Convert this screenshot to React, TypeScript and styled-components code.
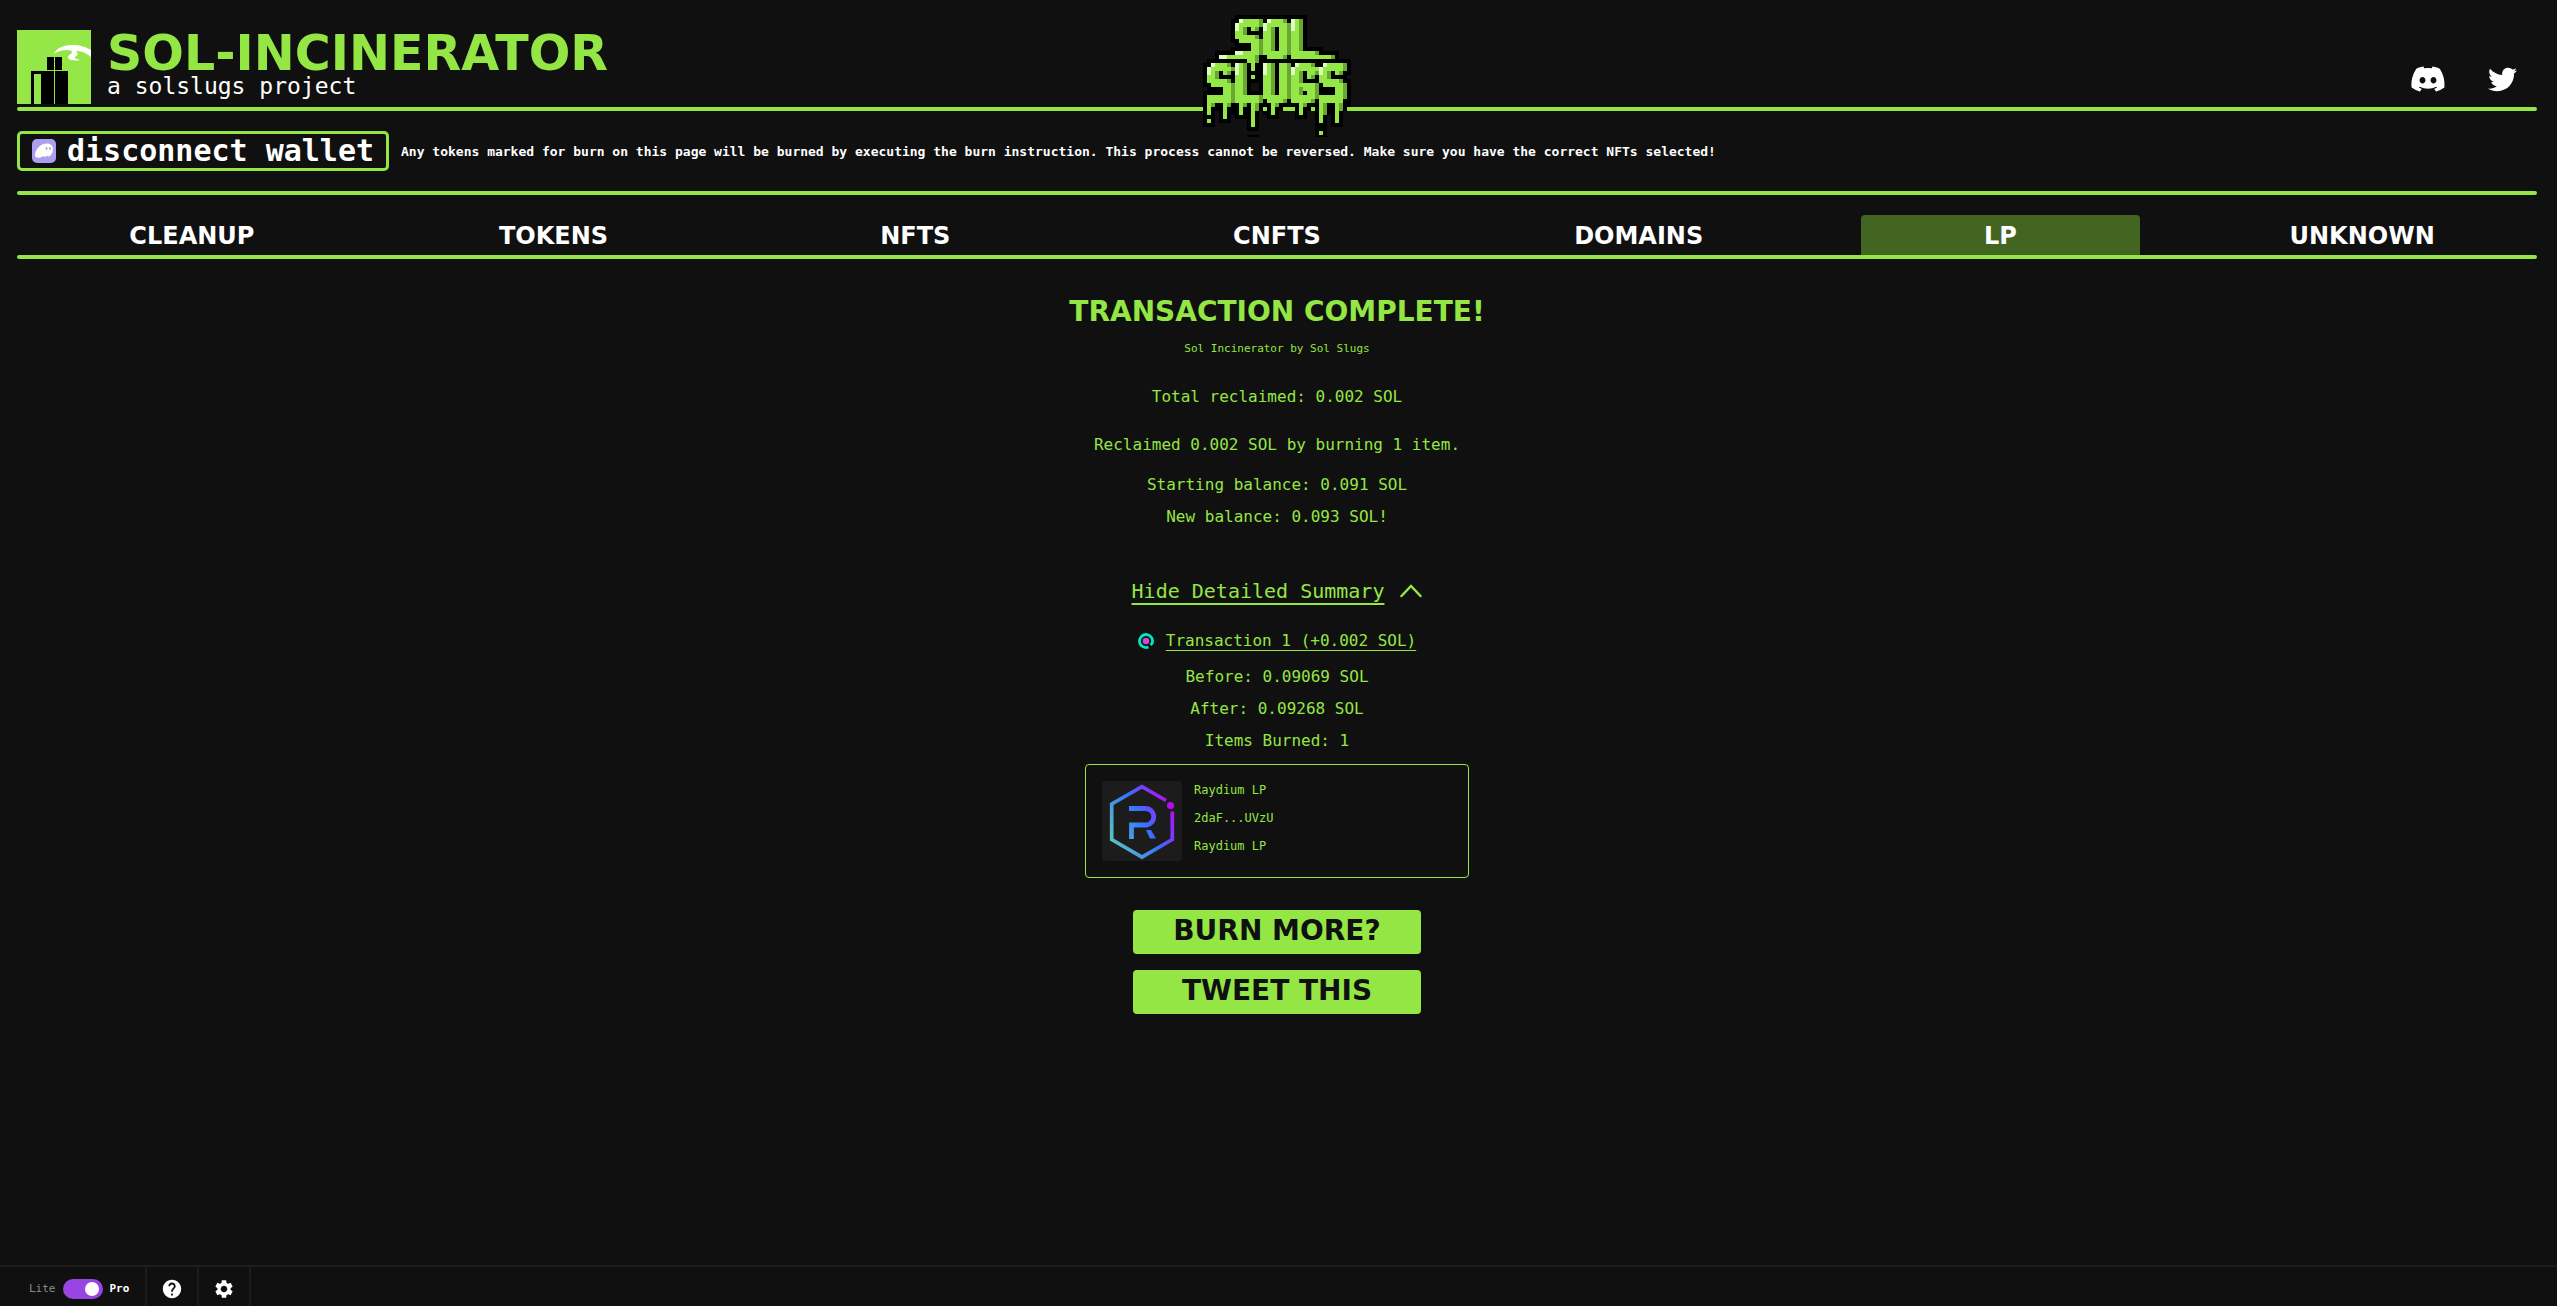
import React, { useState } from "react";
import styled, { createGlobalStyle, ThemeProvider } from "styled-components";
import { FaDiscord, FaTwitter } from "react-icons/fa";
import { MdHelp, MdSettings } from "react-icons/md";

const theme = {
  bg: "#101010",
  green: "#94e645",
  tab: "#426522",
  line: "#1c1c1c",
  mono: '"DejaVu Sans Mono", "Liberation Mono", monospace',
  wide: '"DejaVu Sans", "Liberation Sans", sans-serif',
};

const GlobalStyle = createGlobalStyle`
  *, *::before, *::after { box-sizing: border-box; }
  body { margin: 0; background: ${theme.bg}; }
  h1, h2, p { margin: 0; }
  button { border: 0; padding: 0; background: none; color: inherit; font: inherit; cursor: pointer; }
`;

const Page = styled.div`
  display: flex;
  flex-direction: column;
  min-height: 100vh;
  background: ${(p) => p.theme.bg};
  color: ${(p) => p.theme.green};
  font-family: ${(p) => p.theme.mono};
  font-size: 16px;
  line-height: 32px;
`;

const Top = styled.div`
  padding: 0 20px 0 17px;
`;

const Rule = styled.div`
  height: 4px;
  border-radius: 2px;
  background: ${(p) => p.theme.green};
`;

const Header = styled.header`
  position: relative;
  display: flex;
  justify-content: space-between;
  padding: 30px 20px 3px 0;
`;

const Brand = styled.div`
  display: flex;
  gap: 16px;
`;

const BrandText = styled.div`
  padding-top: 8px;
`;

const BrandName = styled.h1`
  font-family: ${(p) => p.theme.wide};
  font-weight: 700;
  font-size: 49px;
  line-height: 32px;
`;

const Tagline = styled.p`
  color: #fff;
  font-size: 23px;
  line-height: 32px;
`;

const SlugsLogo = styled.svg`
  position: absolute;
  top: 15px;
  left: 50%;
  margin-left: -74px;
  z-index: 1;
`;

const Socials = styled.div`
  display: flex;
  align-items: center;
  gap: 42px;
  padding-top: 24px;
`;

const SocialLink = styled.a`
  display: flex;
  color: #fff;
`;

const WalletRow = styled.div`
  display: flex;
  align-items: center;
  gap: 12px;
  min-height: 80px;
`;

const WalletButton = styled.button`
  && {
    display: flex;
    align-items: center;
    gap: 11px;
    height: 40px;
    padding: 0 12px;
    border: 3px solid ${(p) => p.theme.green};
    border-radius: 5px;
    color: #fff;
    font-weight: 700;
    font-size: 30px;
    line-height: 30px;
  }
`;

const Warning = styled.p`
  padding-top: 2px;
  color: #fff;
  font-weight: 700;
  font-size: 13px;
  line-height: 20px;
`;

const Tabs = styled.nav`
  display: grid;
  grid-template-columns: repeat(7, 1fr);
  column-gap: 82px;
  padding: 20px 35px 0;
`;

const Tab = styled.button<{ $active: boolean }>`
  && {
    height: 40px;
    padding-top: 2px;
    border-radius: 4px 4px 0 0;
    background: ${(p) => (p.$active ? p.theme.tab : "transparent")};
    color: #fff;
    font-family: ${(p) => p.theme.wide};
    font-weight: 700;
    font-size: 24px;
    line-height: 38px;
  }
`;

const Main = styled.main`
  flex: 1;
  display: flex;
  flex-direction: column;
  align-items: center;
  padding: 37px 20px 60px 17px;
  text-align: center;
`;

const Title = styled.h2`
  font-family: ${(p) => p.theme.wide};
  font-weight: 700;
  font-size: 28px;
  line-height: 32px;
`;

const Subtitle = styled.p`
  padding: 13px 0 24px;
  font-size: 11px;
  line-height: 16px;
`;

const Lead = styled.p`
  padding-bottom: 16px;
`;

const Result = styled.p`
  padding-bottom: 8px;
`;

const SummaryToggle = styled.button`
  && {
    display: flex;
    align-items: center;
    gap: 16px;
    margin-top: 42px;
    font-size: 20px;
    line-height: 32px;
  }
  span {
    text-decoration: underline;
    text-decoration-thickness: 2px;
    text-underline-offset: 5px;
  }
`;

const TxRow = styled.div`
  display: flex;
  align-items: center;
  gap: 12px;
  padding: 18px 0 4px;
`;

const TxLink = styled.a`
  color: inherit;
  text-decoration: underline;
  text-decoration-thickness: 1px;
  text-underline-offset: 4px;
`;

const Card = styled.article`
  display: flex;
  gap: 12px;
  width: 384px;
  margin: 7px 0 32px;
  padding: 16px;
  border: 1px solid ${(p) => p.theme.green};
  border-radius: 4px;
`;

const TokenArt = styled.svg`
  flex: none;
  border-radius: 4px;
  background: #1c1c1c;
`;

const CardText = styled.div`
  height: 80px;
  margin-top: -5px;
  text-align: left;
  font-size: 12px;
  line-height: 28px;
`;

const Actions = styled.div`
  display: grid;
  gap: 16px;
`;

const Action = styled.button`
  && {
    width: 288px;
    height: 44px;
    border-radius: 4px;
    background: ${(p) => p.theme.green};
    color: ${(p) => p.theme.bg};
    font-family: ${(p) => p.theme.wide};
    font-weight: 700;
    font-size: 28px;
    line-height: 40px;
    padding-bottom: 2px;
  }
`;

const Footer = styled.footer`
  display: flex;
  height: 41px;
  border-top: 2px solid ${(p) => p.theme.line};
  color: #fff;
`;

const FooterCell = styled.div`
  display: flex;
  align-items: center;
  justify-content: center;
  min-width: 52px;
  padding-top: 5px;
  border-right: 2px solid ${(p) => p.theme.line};
`;

const ModeCell = styled(FooterCell)`
  gap: 7px;
  padding-left: 29px;
  padding-right: 16px;
`;

const ModeLabel = styled.label<{ $on: boolean }>`
  color: ${(p) => (p.$on ? "#fff" : "#8b8b8b")};
  font-weight: ${(p) => (p.$on ? 700 : 400)};
  font-size: 11px;
  line-height: 20px;
`;

const Switch = styled.input`
  appearance: none;
  display: flex;
  align-items: center;
  justify-content: flex-end;
  width: 40px;
  height: 20px;
  margin: 0;
  padding: 0 4px;
  border-radius: 10px;
  background: #9945e3;
  cursor: pointer;
  &::before {
    content: "";
    width: 14px;
    height: 14px;
    border-radius: 50%;
    background: #fff;
  }
  &:not(:checked) {
    justify-content: flex-start;
    background: #444;
  }
`;

const IconButton = styled.button`
  && {
    display: flex;
  }
`;

/* Pixel art rows: every token is a colour and the column its run starts at. */
const SLUGS = [
  "K8 .26",
  "K7 L9 G10 D14 K15 L16 G17 D20 K21 L22 G23 D24 K25 .26",
  "K7 L8 G9 D14 L15 G16 D21 L22 G23 D24 K25 .26",
  "K7 L8 G9 D10 K11 G12 D13 K14 L15 G16 D17 K18 G19 D21 L22 G23 D24 K25 .26",
  "K7 G8 D10 K11 G15 D17 K18 G19 D21 G22 D24 K25 .26",
  "K7 G8 D13 K14 G15 D17 K18 G19 D21 G22 D24 K25 .26",
  "K7 G9 D14 G15 D17 K18 G19 D21 G22 D24 K25 .26",
  "K8 G12 D14 G15 D17 K18 G19 D21 G22 D24 K25 .26",
  "K7 G12 D14 G15 D17 K18 G19 D21 G22 D24 K25 .30",
  "K3 L8 G10 D14 G15 D21 G22 D28 K29 .34",
  "K3 L4 G6 D13 K14 G16 D20 K21 G22 D32 K33 .34",
  "K1 G11 D13 K14 .37",
  "K0 L2 G3 D6 K7 L8 G9 D10 K11 G12 K13 L15 G16 D17 K18 G19 D21 K22 L23 G24 D27 K28 L30 G31 D35 K36 .37",
  "K0 L1 G2 D7 L8 G9 D10 K11 G12 K13 L15 G16 D17 K18 G19 D21 L22 G23 L29 G30 D35 K36 .37",
  "K0 L1 G2 D3 K4 G5 D6 K7 L8 G9 D10 K11 L15 G16 D17 K18 G19 D21 L22 G23 D24 K25 G26 D28 L29 G30 D31 K32 G33 D34 K35 .37",
  "K0 G1 D3 K4 G8 D10 K11 G12 K13 G15 D17 K18 G19 D21 G22 D24 K25 G26 D27 K28 G29 D31 K32 .36",
  "K0 G1 D6 K7 G8 D10 K11 G15 D17 K18 G19 D21 G22 D24 K25 G29 D34 K35 .37",
  "K0 G2 D7 G8 D10 K11 .12 K14 G15 D17 K18 G19 D21 G22 D28 K29 G30 D35 K36 .37",
  "K1 G5 D7 G8 D10 K11 .12 K14 G15 D17 K18 G19 D21 G22 D24 G25 D28 K29 G33 D35 K36 .37",
  "K0 G5 D7 G8 D10 K11 G15 D17 K18 G19 D21 G22 D24 K25 G26 D28 K29 G33 D35 K36 .37",
  "K0 G1 D7 G8 D14 G15 D21 G22 D28 G29 D35 K36 .37",
  "K0 G1 D7 G8 D14 K15 G16 D20 K21 G22 D27 K28 G29 K35 .37",
  "K0 G1 D2 K3 G5 D6 K7 G9 D10 K11 G12 D13 K14 G17 D18 K19 G24 D25 K26 G29 D30 K31 G33 D34 K35 .37",
  "K0 G1 K2 G5 K6 G9 K10 G12 D13 K14 G15 K16 G17 K18 G20 K23 G24 K25 G27 K28 G29 D30 K31 G33 D34 K35 .36",
  "K0 G1 K2 .3 K4 G5 K6 G9 K10 G12 K13 .14 K15 G17 K18 .19 K23 G24 K25 .26 K28 G29 D30 K31 G33 K34 .35",
  "K0 .3 K4 G5 K6 .7 K8 G12 K13 .14 K16 .19 K23 .26 K28 G29 K30 .31 K32 G33 K34 .35",
  "K0 G1 K2 .3 K4 .7 K11 G12 K13 .14 K28 G29 K30 .31 K32 G33 K34 .35",
  "K0 .3 K11 G12 K13 .14 K28 .31 K32 .35",
  "K11 .14 K28 .31",
  "K28 G29 K30 .31",
  "K11 .14 K28 .31",
];
const INK: Record<string, string> = { K: "#000", G: "#94e746", D: "#66a832", L: "#dfffc4" };

function SolSlugs() {
  return (
    <SlugsLogo width="148" height="122" viewBox="0 0 37 30.5" shapeRendering="crispEdges" role="img" aria-label="Sol Slugs">
      {SLUGS.map((row, y) => {
        const runs = row.split(" ").map((t) => ({ ink: t[0], x: Number(t.slice(1)) }));
        return runs.map((r, i) =>
          r.ink === "." || !runs[i + 1] ? null : (
            <rect key={`${y}-${i}`} x={r.x} y={y} width={runs[i + 1].x - r.x} height={1} fill={INK[r.ink]} />
          )
        );
      })}
    </SlugsLogo>
  );
}

const Incinerator = () => (
  <svg width="74" height="74" viewBox="0 0 74 74" aria-hidden="true">
    <rect width="74" height="74" fill="#94e746" />
    <path d="M14 41h37v33H14zM30 27h15v13H30z" fill="#000" />
    <path d="M17 44h7v30h-7zM37 27h1v47h-1z" fill="#94e746" />
    <path
      d="M37 24C39 18 47 15 55 15c8 0 14 2 19 5v7c-5-4-9-6-15-6 3 3 1 5-1 6-1 1 1 2 6 3-8 1-13 0-13-3 0-2 4-3 4-5 0-3-12-3-18 2z"
      fill="#fff"
    />
  </svg>
);

const Phantom = () => (
  <svg width="24" height="24" viewBox="0 0 24 24" aria-hidden="true">
    <rect width="24" height="24" rx="5" fill="#ab9ff2" />
    <path
      d="M3 16.500C3 11 8 4.500 15 4.500c4 0 6 2.500 6 5.500 0 4-2.500 7.500-4.500 7.500-1 0-1.300-.6-1.200-1.300-.9 1.100-1.900 1.700-2.900 1.700-.8 0-1.200-.5-1.200-1.200-1.200 1.200-2.600 2-4.200 2C4.500 18.700 3 18 3 16.500z"
      fill="#fffdf8"
    />
    <ellipse cx="14.500" cy="9.500" rx="0.900" ry="1.400" fill="#ab9ff2" />
    <ellipse cx="18" cy="9.500" rx="0.900" ry="1.400" fill="#ab9ff2" />
  </svg>
);

const Chevron = () => (
  <svg width="22" height="14" viewBox="0 0 22 14" fill="none" stroke="#94e645" strokeWidth="2.500" strokeLinecap="round" aria-hidden="true">
    <path d="M1.500 12L11 2l9.500 10" />
  </svg>
);

const Solscan = () => (
  <svg width="16" height="16" viewBox="0 0 16 16" fill="none" aria-hidden="true">
    <path d="M10.500 14A6.500 6.500 0 1 1 14 10.500L12.500 12" stroke="#00e8b5" strokeWidth="2.800" />
    <circle cx="8" cy="8" r="3.300" fill="#c74ae3" />
  </svg>
);

const Raydium = () => (
  <TokenArt width="80" height="80" viewBox="0 0 80 80" fill="none" aria-hidden="true">
    <defs>
      <linearGradient id="ray" gradientUnits="userSpaceOnUse" x1="72" y1="22" x2="8" y2="58">
        <stop offset="0" stopColor="#c200fb" />
        <stop offset="0.490" stopColor="#3772ff" />
        <stop offset="1" stopColor="#5ac4be" />
      </linearGradient>
    </defs>
    <path d="M64 19.500L40 5.700 9.700 23v35.500L40 76l30.300-17.500v-28" stroke="url(#ray)" strokeWidth="3.700" />
    <path d="M27 27.500h16.500a8.200 8.200 0 0 1 0 16.500h-14v14" stroke="url(#ray)" strokeWidth="4.800" />
    <path d="M44 49h5l5 8.500h-6z" fill="url(#ray)" />
    <circle cx="68.500" cy="24.500" r="3.600" fill="#b808f5" />
  </TokenArt>
);

const TABS = ["CLEANUP", "TOKENS", "NFTS", "CNFTS", "DOMAINS", "LP", "UNKNOWN"];

export default function App() {
  const [tab, setTab] = useState("LP");
  const [open, setOpen] = useState(true);
  const [pro, setPro] = useState(true);

  return (
    <ThemeProvider theme={theme}>
      <GlobalStyle />
      <Page>
        <Top>
          <Header>
            <Brand>
              <Incinerator />
              <BrandText>
                <BrandName>SOL-INCINERATOR</BrandName>
                <Tagline>a solslugs project</Tagline>
              </BrandText>
            </Brand>
            <SolSlugs />
            <Socials>
              <SocialLink href="#discord" aria-label="Discord">
                <FaDiscord size={36} />
              </SocialLink>
              <SocialLink href="#twitter" aria-label="Twitter">
                <FaTwitter size={29} />
              </SocialLink>
            </Socials>
          </Header>
          <Rule />
          <WalletRow>
            <WalletButton type="button">
              <Phantom />
              disconnect wallet
            </WalletButton>
            <Warning>
              Any tokens marked for burn on this page will be burned by executing the burn instruction. This process
              cannot be reversed. Make sure you have the correct NFTs selected!
            </Warning>
          </WalletRow>
          <Rule />
          <Tabs>
            {TABS.map((name) => (
              <Tab key={name} type="button" $active={name === tab} onClick={() => setTab(name)}>
                {name}
              </Tab>
            ))}
          </Tabs>
          <Rule />
        </Top>

        <Main>
          <Title>TRANSACTION COMPLETE!</Title>
          <Subtitle>Sol Incinerator by Sol Slugs</Subtitle>
          <Lead>Total reclaimed: 0.002 SOL</Lead>
          <Result>Reclaimed 0.002 SOL by burning 1 item.</Result>
          <p>Starting balance: 0.091 SOL</p>
          <p>New balance: 0.093 SOL!</p>
          <SummaryToggle type="button" aria-expanded={open} onClick={() => setOpen(!open)}>
            <span>Hide Detailed Summary</span>
            <Chevron />
          </SummaryToggle>
          {open && (
            <>
              <TxRow>
                <Solscan />
                <TxLink href="#transaction">Transaction 1 (+0.002 SOL)</TxLink>
              </TxRow>
              <p>Before: 0.09069 SOL</p>
              <p>After: 0.09268 SOL</p>
              <p>Items Burned: 1</p>
              <Card>
                <Raydium />
                <CardText>
                  <p>Raydium LP</p>
                  <p>2daF...UVzU</p>
                  <p>Raydium LP</p>
                </CardText>
              </Card>
            </>
          )}
          <Actions>
            <Action type="button">BURN MORE?</Action>
            <Action type="button">TWEET THIS</Action>
          </Actions>
        </Main>

        <Footer>
          <ModeCell>
            <ModeLabel htmlFor="mode" $on={false}>
              Lite
            </ModeLabel>
            <Switch id="mode" type="checkbox" checked={pro} onChange={() => setPro(!pro)} />
            <ModeLabel htmlFor="mode" $on>
              Pro
            </ModeLabel>
          </ModeCell>
          <FooterCell>
            <IconButton type="button" aria-label="Help">
              <MdHelp size={22} />
            </IconButton>
          </FooterCell>
          <FooterCell>
            <IconButton type="button" aria-label="Settings">
              <MdSettings size={22} />
            </IconButton>
          </FooterCell>
        </Footer>
      </Page>
    </ThemeProvider>
  );
}
